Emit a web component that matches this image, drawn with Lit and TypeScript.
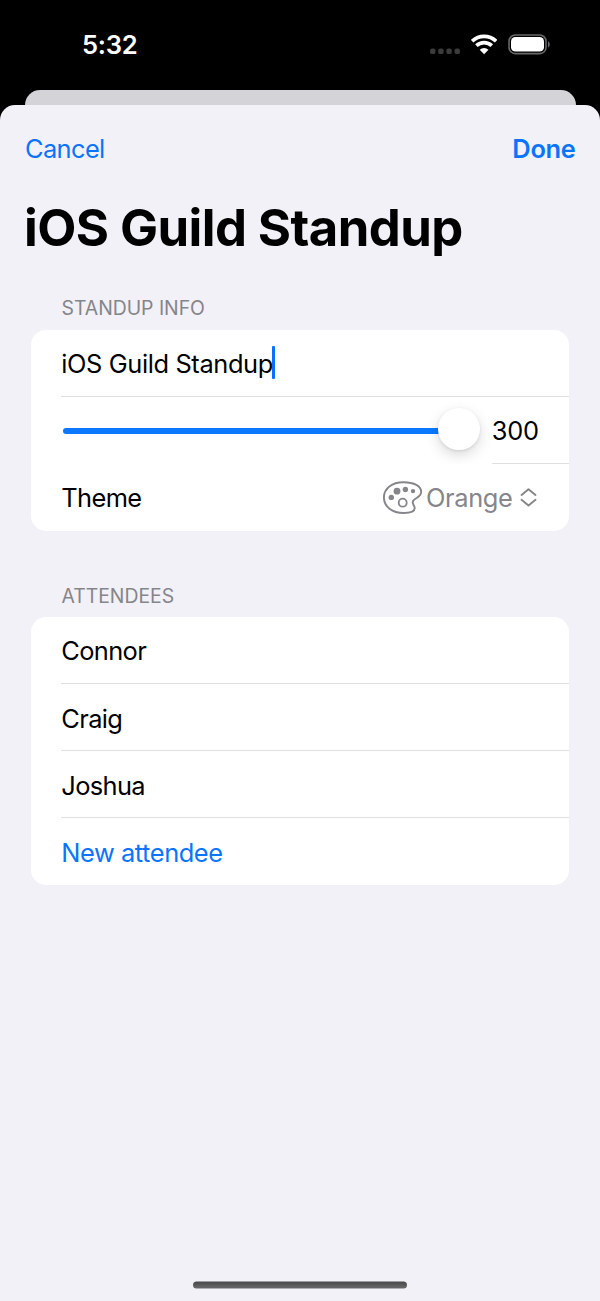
import { LitElement, html, css } from "lit";
import { customElement, state } from "lit/decorators.js";

@customElement("status-bar")
class StatusBar extends LitElement {
  static styles = css`
    :host { display: flex; justify-content: space-between; height: 90px; box-sizing: border-box; padding: 29px 50px 0 82px; color: #fff; }
    .time { font-size: 25.6px; font-weight: 600; line-height: 32px; letter-spacing: -0.25px; }
    .icons { display: flex; height: 32px; align-items: center; }
    .dots { margin-right: 9.5px; }
    .wifi { margin-right: 11px; }
    svg { display: block; }
  `;
  render() {
    return html`
      <span class="time">5:32</span>
      <span class="icons">
        <svg class="dots" width="32" height="32" viewBox="0 0 32 32" fill="#3b3b3b">
          <rect x="0" y="19.6" width="5.5" height="5.5" rx="2.2" /><rect x="8.2" y="19.6" width="5.5" height="5.5" rx="2.2" />
          <rect x="16.3" y="19.6" width="5.5" height="5.5" rx="2.2" /><rect x="24.5" y="19.6" width="5.5" height="5.5" rx="2.2" />
        </svg>
        <svg class="wifi" width="26" height="32" viewBox="0 0 26 32">
          <g fill="none" stroke="#fff" stroke-width="3.7">
            <path d="M1.1 12.2a17.3 17.3 0 0 1 24 0" />
            <path d="M5.4 16.7a11.2 11.2 0 0 1 15.4 0" />
          </g>
          <path d="M13.1 25.2 8.7 20.8a6.6 6.6 0 0 1 8.8 0z" fill="#fff" />
        </svg>
        <svg width="42" height="32" viewBox="0 0 42 32">
          <rect x="1" y="6" width="37" height="18.6" rx="6.2" fill="none" stroke="#68686a" stroke-width="1.6" />
          <rect x="3" y="8" width="33" height="14.6" rx="4.4" fill="#fff" />
          <path d="M40.1 12.2c2.1.9 2.1 5.4 0 6.3z" fill="#77777a" />
        </svg>
      </span>
    `;
  }
}

@customElement("theme-picker")
class ThemePicker extends LitElement {
  static styles = css`
    :host { display: flex; align-items: center; color: #85858a; letter-spacing: -0.38px; }
    svg { display: block; flex: none; }
    .name { margin-left: 2.7px; }
    .chevrons { margin-left: 7.5px; }
  `;
  render() {
    return html`
      <svg width="40" height="34" viewBox="0 0 40 34" fill="currentColor">
        <path d="M20.6 1.2C9 1.1.9 7.7.9 16.3c0 9.4 8.4 15.7 19.8 15.7 6.6 0 11-1.7 11-4.9 0-2.5-2.2-3.4-2-6 .5-4.6 8.5-3.9 8.5-10C38.2 5 31 1.3 20.6 1.2z" fill="none" stroke="currentColor" stroke-width="1.9" />
        <circle cx="14" cy="10.2" r="3.4" /><circle cx="22.4" cy="8.5" r="2.7" /><circle cx="30" cy="10.1" r="2.2" /><circle cx="8.3" cy="16.4" r="2.7" />
        <circle cx="19.7" cy="21.7" r="4" fill="none" stroke="currentColor" stroke-width="1.8" />
      </svg>
      <span class="name">Orange</span>
      <svg class="chevrons" width="17" height="20" viewBox="0 0 17 20" fill="none" stroke="currentColor" stroke-width="1.9" stroke-linecap="round" stroke-linejoin="round">
        <path d="M1.5 7 8.5 1.3l7 5.7M1.5 11.8l7 5.7 7-5.7" />
      </svg>
    `;
  }
}

@customElement("app-root")
class AppRoot extends LitElement {
  @state() name = "iOS Guild Standup";
  @state() seconds = 300;
  @state() attendees = ["Connor", "Craig", "Joshua"];

  static styles = css`
    :host { display: flex; flex-direction: column; height: 1301px; overflow: hidden; background: #000; font-family: Inter, "Liberation Sans", sans-serif; font-size: 25.4px; color: #000; }
    .backdrop { flex: none; height: 34px; margin: 0 24.5px -19px; background: #d4d3d8; border-radius: 15px 15px 0 0; }
    .sheet { flex: 1; display: flex; flex-direction: column; position: relative; background: #f2f1f7; border-radius: 15px 15px 0 0; }
    .nav { display: flex; justify-content: space-between; padding: 28px 24.5px 0 25px; line-height: 32px; color: #0a74ff; }
    .cancel { letter-spacing: -0.6px; }
    .done { font-weight: 600; letter-spacing: -0.3px; }
    h1 { margin: 32px 24px 0; font-size: 50.8px; line-height: 62px; font-weight: 700; letter-spacing: -0.57px; }
    .label { margin: 37px 0 0 61.5px; font-size: 19.4px; line-height: 24px; height: 24px; color: #85858a; letter-spacing: -0.02px; }
    .second { margin-top: 53px; }
    .card { margin: 9.6px 30.8px 0; background: #fff; border-radius: 15px; overflow: hidden; }
    .second + .card { margin-top: 8.8px; }
    .row { display: flex; align-items: center; height: 67.1px; margin-left: 30.5px; padding: 1.5px 31px 0 0; box-sizing: border-box; border-bottom: 1px solid #dfdfe1; letter-spacing: -0.62px; }
    .row:last-child { border-bottom: 0; padding-top: 0.5px; }
    .second + .card .row { height: 67.2px; padding-top: 2.2px; }
    .field { letter-spacing: -0.38px; }
    .caret { width: 3px; height: 33px; margin-left: -1px; background: #0a6fff; border-radius: 1px; margin-top: -2px; }
    .slider-row { border-bottom: 0; padding: 0; }
    .slider { width: 430.5px; height: 67px; display: flex; align-items: center; overflow: hidden; }
    .track { width: 385px; height: 5.6px; margin-left: 1.5px; margin-top: 2px; border-radius: 3px 0 0 3px; background: #0b78ff; }
    .knob { width: 41.5px; height: 41.5px; margin: -2px 0 0 -9.5px; border-radius: 50%; background: #fff; box-shadow: 0 5px 14px rgba(0, 0, 0, 0.15), 0 1px 3px rgba(0, 0, 0, 0.1); }
    .value { flex: 1; height: 66px; line-height: 67px; border-bottom: 1px solid #dfdfe1; align-self: flex-start; letter-spacing: -0.3px; }
    .spread { justify-content: space-between; padding-right: 32.3px; }
    .add { color: #0a74ff; letter-spacing: -0.42px; }
    .spacer { flex: 1; }
    .home { width: 214px; height: 7px; margin: 0 auto 13px; transform: translateY(0.5px); border-radius: 4px; background: linear-gradient(#48484a, #6a6a6c); }
  `;

  render() {
    return html`
      <status-bar></status-bar>
      <div class="backdrop"></div>
      <main class="sheet">
        <nav class="nav"><span class="cancel">Cancel</span><span class="done">Done</span></nav>
        <h1>${this.name}</h1>
        <div class="label">STANDUP INFO</div>
        <section class="card">
          <div class="row"><span class="field">${this.name}</span><i class="caret"></i></div>
          <div class="row slider-row">
            <div class="slider"><div class="track"></div><div class="knob"></div></div>
            <span class="value">${this.seconds}</span>
          </div>
          <div class="row spread"><span class="theme">Theme</span><theme-picker></theme-picker></div>
        </section>
        <div class="label second">ATTENDEES</div>
        <section class="card">
          ${this.attendees.map((a) => html`<div class="row"><span>${a}</span></div>`)}
          <div class="row add"><span class="new">New attendee</span></div>
        </section>
        <div class="spacer"></div>
        <div class="home"></div>
      </main>
    `;
  }
}
